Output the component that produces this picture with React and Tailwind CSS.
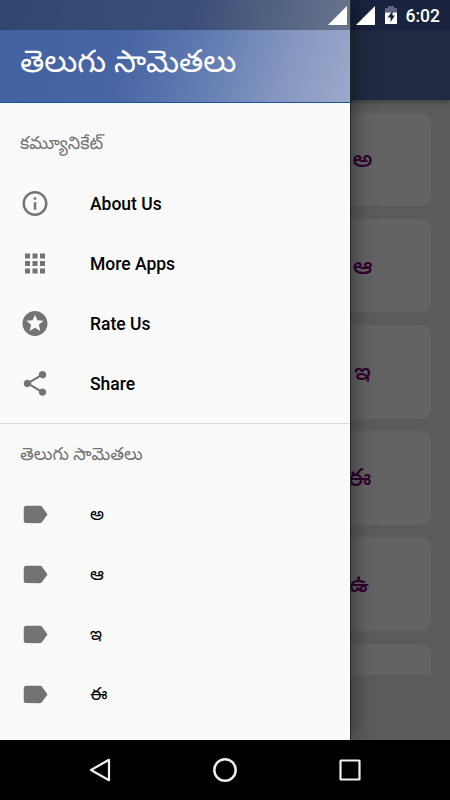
import React from 'react';

const ICONS = {
  info: 'M11 17h2v-6h-2v6zm1-15C6.48 2 2 6.48 2 12s4.48 10 10 10 10-4.48 10-10S17.52 2 12 2zm0 18c-4.41 0-8-3.59-8-8s3.59-8 8-8 8 3.59 8 8-3.59 8-8 8zM11 9h2V7h-2v2z',
  apps: 'M4 8h4V4H4v4zm6 12h4v-4h-4v4zm-6 0h4v-4H4v4zm0-6h4v-4H4v4zm6 0h4v-4h-4v4zm6-10v4h4V4h-4zm-6 4h4V4h-4v4zm6 6h4v-4h-4v4zm0 6h4v-4h-4v4z',
  stars: 'M11.99 2C6.47 2 2 6.48 2 12s4.47 10 9.99 10C17.52 22 22 17.52 22 12S17.52 2 11.99 2zm4.24 16L12 15.45 7.77 18l1.12-4.81-3.73-3.23 4.92-.42L12 5l1.92 4.53 4.92.42-3.73 3.23L16.23 18z',
  share: 'M18 16.08c-.76 0-1.44.3-1.96.77L8.91 12.7c.05-.23.09-.46.09-.7s-.04-.47-.09-.7l7.05-4.11c.54.5 1.25.81 2.04.81 1.66 0 3-1.34 3-3s-1.34-3-3-3-3 1.34-3 3c0 .24.04.47.09.7L8.04 9.81C7.5 9.31 6.79 9 6 9c-1.66 0-3 1.34-3 3s1.34 3 3 3c.79 0 1.5-.31 2.04-.81l7.12 4.16c-.05.21-.08.43-.08.65 0 1.61 1.31 2.92 2.92 2.92 1.61 0 2.92-1.31 2.92-2.92s-1.31-2.92-2.92-2.92z',
  label: 'M17.63 5.84C17.27 5.33 16.67 5 16 5L5 5.01C3.9 5.01 3 5.9 3 7v10c0 1.1.9 1.99 2 1.99L16 19c.67 0 1.27-.33 1.63-.84L22 12l-4.37-6.16z',
};

function Item({ icon, children }) {
  return (
    <li className="flex h-[60px] items-center pl-5">
      <svg viewBox="0 -0.3 24 24" className="mr-10 size-[30px] fill-[#737373]">
        <path d={ICONS[icon]} />
      </svg>
      {icon === 'label' ? (
        <span className="text-[17.5px] leading-6 text-black">{children}</span>
      ) : (
        <span className="pt-[2px] text-[17.5px] leading-6 font-medium text-black">{children}</span>
      )}
    </li>
  );
}

function Signal() {
  return (
    <svg viewBox="0 0 19 19" className="size-[19px] fill-white">
      <path d="M19 0V19H0z" />
    </svg>
  );
}

const CARDS = [
  { letter: 'అ', pad: 'pr-[58.5px]' },
  { letter: 'ఆ', pad: 'pr-[58.5px]' },
  { letter: 'ఇ', pad: 'pr-[60px]' },
  { letter: 'ఈ', pad: 'pr-[59.5px]' },
  { letter: 'ఉ', pad: 'pr-[62px]' },
  { letter: '', pad: 'pr-[59px]' },
];

export default function App() {
  return (
    <div className="relative flex h-[800px] w-[450px] flex-col overflow-hidden bg-[#5b5b5b] font-['Roboto','Noto_Sans_Telugu','Noto_Sans',sans-serif]">
      <div className="h-[30px] shrink-0 bg-[#1a233e]" />
      <header className="h-[70px] shrink-0 bg-[#202a43] shadow-[0_2px_5px_rgba(0,0,0,0.35)]" />
      <main className="flex h-[575px] shrink-0 flex-col gap-[12.7px] overflow-hidden px-[19px] pt-[12.7px]">
        {CARDS.map(({ letter, pad }, i) => (
          <div
            key={i}
            className={`flex h-[93.5px] shrink-0 items-center justify-end rounded-[9px] bg-[#636363] text-[24px] font-medium text-[#300030] ${pad}`}
          >
            {letter}
          </div>
        ))}
      </main>
      <div className="grow" />
      <nav className="relative z-30 flex h-[60px] shrink-0 items-center justify-between bg-black px-[85px]">
        <svg viewBox="0 0 30 30" className="size-[30px] fill-none stroke-[#eee] stroke-[2.2]">
          <path d="M6 15L24 4.8V25.2z" strokeLinejoin="round" />
        </svg>
        <svg viewBox="0 0 30 30" className="size-[30px] fill-none stroke-[#eee] stroke-[2.5]">
          <circle cx="15" cy="15" r="10.7" />
        </svg>
        <svg viewBox="0 0 30 30" className="size-[30px] fill-none stroke-[#eee] stroke-[2.2]">
          <rect x="5.5" y="5.5" width="19" height="19" rx="0.5" />
        </svg>
      </nav>

      <aside className="absolute top-0 left-0 z-10 h-[740px] w-[350px] bg-[#fafafa] shadow-[1px_0_0_#20272b,3px_0_20px_rgba(0,0,0,0.45)]">
        <div className="flex h-[103px] flex-col border-b border-[#1753a0] bg-[linear-gradient(108deg,#42619f_0%,#4966a4_38%,#6680b4_62%,#8496c1_80%,#9ca9ca_100%)]">
          <div className="h-[30px] bg-[linear-gradient(100deg,#30466f_0%,#3b4e79_55%,#526380_78%,#68748f_100%)]" />
          <h1 className="pt-[11px] pl-5 text-[31.2px] leading-[42px] whitespace-nowrap text-white">తెలుగు సామెతలు</h1>
        </div>
        <h2 className="mt-[25px] h-[45px] pl-5 text-[17.7px] leading-[30px] text-[#737373]">కమ్యూనికేట్</h2>
        <ul>
          <Item icon="info">About Us</Item>
          <Item icon="apps">More Apps</Item>
          <Item icon="stars">Rate Us</Item>
          <Item icon="share">Share</Item>
        </ul>
        <div className="mt-[10px] h-px bg-[#dadada]" />
        <h2 className="mt-[15px] h-[45px] pl-5 text-[17.7px] leading-[30px] text-[#737373]">తెలుగు సామెతలు</h2>
        <ul>
          <Item icon="label">అ</Item>
          <Item icon="label">ఆ</Item>
          <Item icon="label">ఇ</Item>
          <Item icon="label">ఈ</Item>
        </ul>
      </aside>

      <div className="absolute top-0 right-[10px] z-20 flex h-[30px] items-center">
        <div className="mr-[9px] flex"><Signal /></div>
        <div className="mr-[9px] flex"><Signal /></div>
        <svg viewBox="0 0 14 20" className="mr-[8px] h-5 w-[14px]">
          <path d="M4 1H10V3H13V7.5H1V3H4z" fill="#5d667c" />
          <path d="M1 7.5H13V19H1z" fill="#fff" />
          <path d="M8.5 6L3.5 12.5H6.5V17L11 10.5H8.5z" fill="#1a233e" />
        </svg>
        <span className="pt-[3px] text-[17.5px] leading-none font-medium text-white">6:02</span>
      </div>
    </div>
  );
}
